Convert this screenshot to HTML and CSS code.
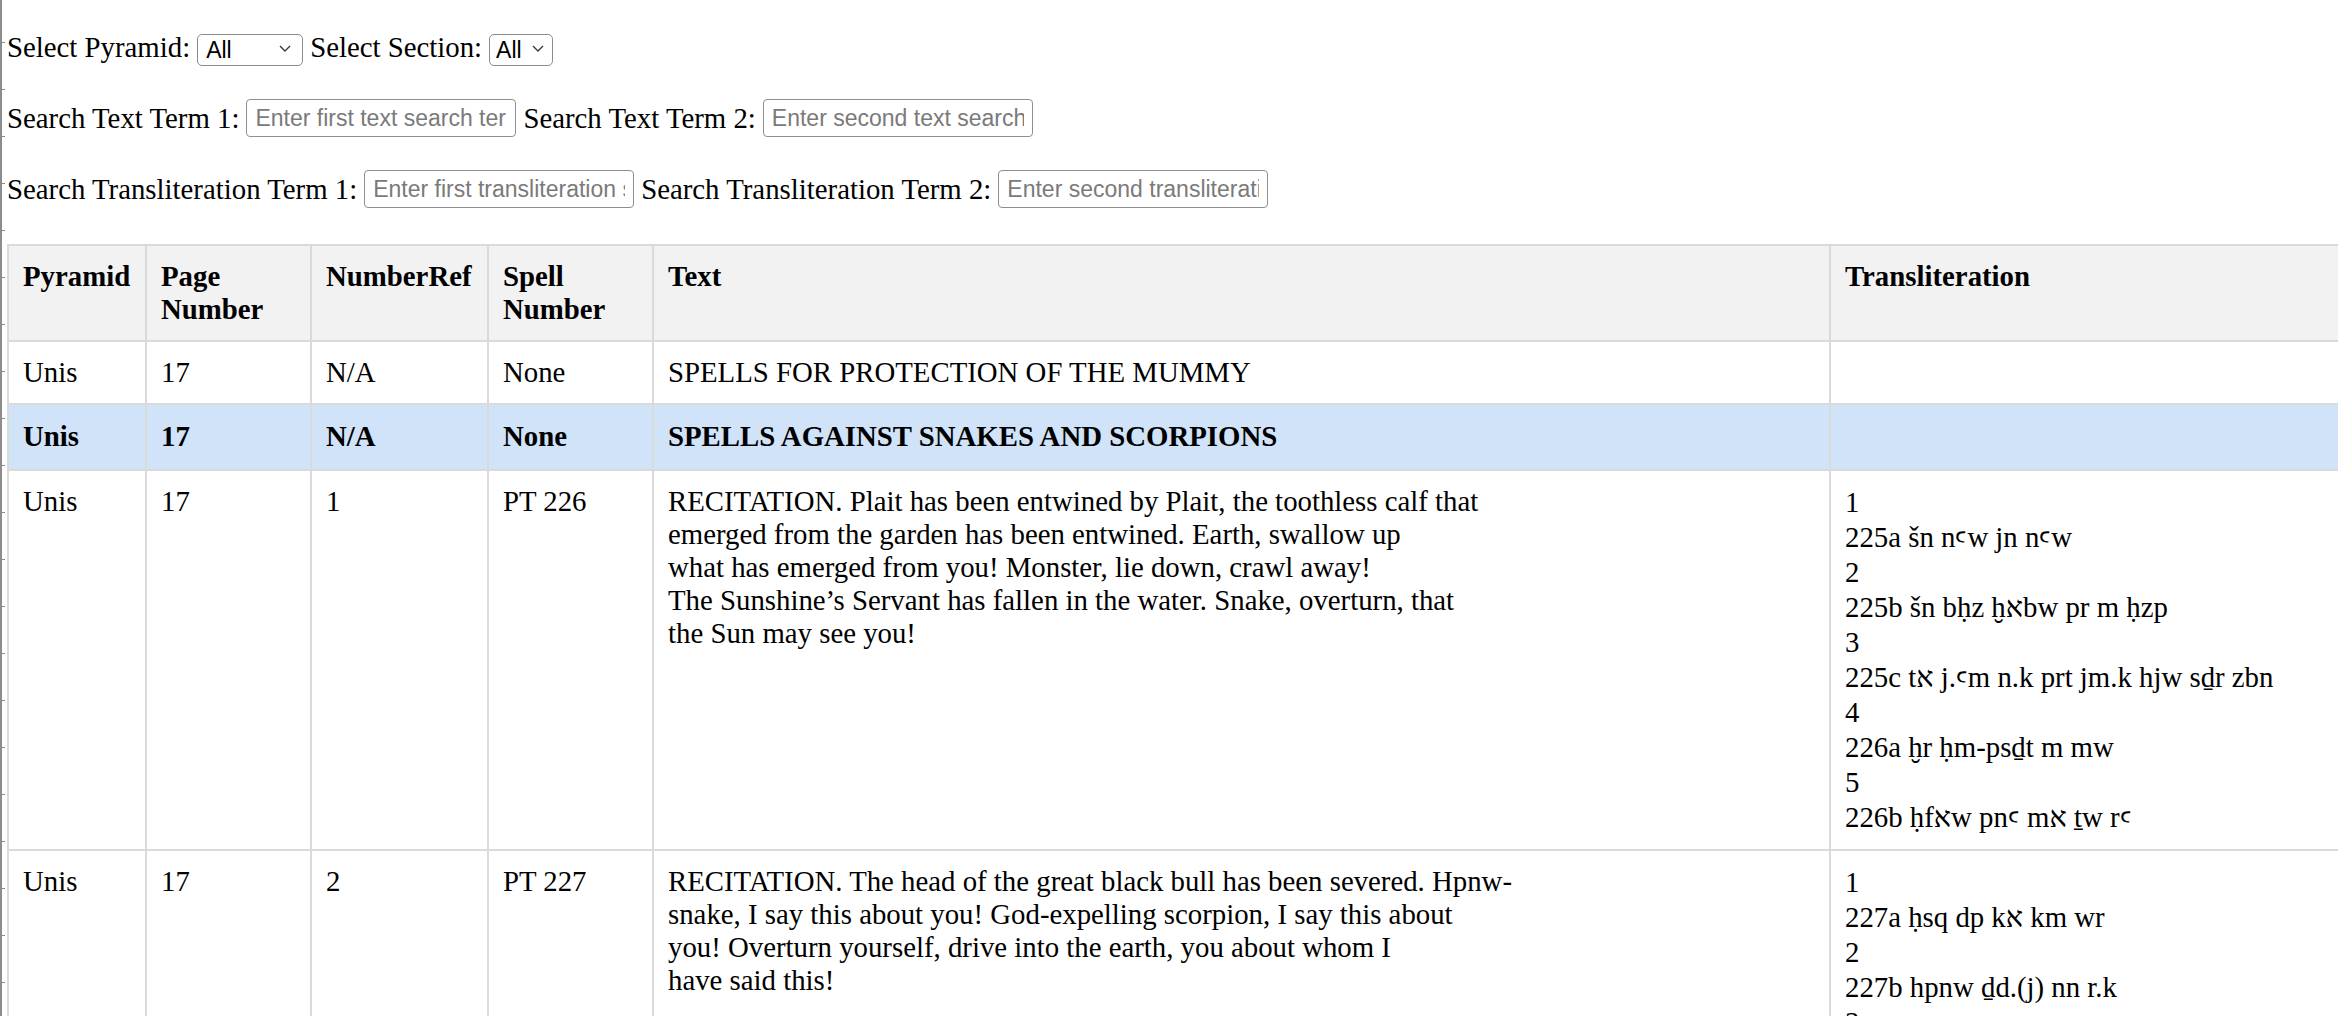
FILE: index.html
```html
<!DOCTYPE html>
<html lang="en">
<head>
<meta charset="utf-8">
<title>Pyramid Texts</title>
<link rel="stylesheet" href="styles.css">
</head>
<body>
<div class="page">
  <div class="filters">
    <div class="filter-row row-select">
      <label class="lbl">Select Pyramid:</label>
      <span class="select-wrap wide">
        <select class="select"><option>All</option><option>Unis</option></select>
        <svg class="chev" width="12" height="7" viewBox="0 0 12 7"><path d="M1 1 L6 6 L11 1" fill="none" stroke="#3a3a3a" stroke-width="1.4"/></svg>
      </span>
      <label class="lbl">Select Section:</label>
      <span class="select-wrap narrow">
        <select class="select"><option>All</option></select>
        <svg class="chev" width="12" height="7" viewBox="0 0 12 7"><path d="M1 1 L6 6 L11 1" fill="none" stroke="#3a3a3a" stroke-width="1.4"/></svg>
      </span>
    </div>
    <div class="filter-row row-text">
      <label class="lbl">Search Text Term 1:</label>
      <input class="field" type="text" placeholder="Enter first text search term">
      <label class="lbl">Search Text Term 2:</label>
      <input class="field" type="text" placeholder="Enter second text search term">
    </div>
    <div class="filter-row row-translit">
      <label class="lbl">Search Transliteration Term 1:</label>
      <input class="field" type="text" placeholder="Enter first transliteration search term">
      <label class="lbl">Search Transliteration Term 2:</label>
      <input class="field" type="text" placeholder="Enter second transliteration search term">
    </div>
  </div>

  <table class="data">
    <colgroup>
      <col class="c-pyr">
      <col class="c-page">
      <col class="c-ref">
      <col class="c-spell">
      <col class="c-text">
      <col class="c-trans">
    </colgroup>
    <thead>
      <tr>
        <th>Pyramid</th>
        <th>Page<br>Number</th>
        <th>NumberRef</th>
        <th>Spell<br>Number</th>
        <th>Text</th>
        <th>Transliteration</th>
      </tr>
    </thead>
    <tbody>
      <tr>
        <td>Unis</td>
        <td>17</td>
        <td>N/A</td>
        <td>None</td>
        <td>SPELLS FOR PROTECTION OF THE MUMMY</td>
        <td></td>
      </tr>
      <tr class="highlight">
        <td>Unis</td>
        <td>17</td>
        <td>N/A</td>
        <td>None</td>
        <td>SPELLS AGAINST SNAKES AND SCORPIONS</td>
        <td></td>
      </tr>
      <tr>
        <td>Unis</td>
        <td>17</td>
        <td>1</td>
        <td>PT 226</td>
        <td>RECITATION. Plait has been entwined by Plait, the toothless calf that<br>emerged from the garden has been entwined. Earth, swallow up<br>what has emerged from you! Monster, lie down, crawl away!<br>The Sunshine’s Servant has fallen in the water. Snake, overturn, that<br>the Sun may see you!</td>
        <td class="translit">1<br>225a šn nꜥw jn nꜥw<br>2<br>225b šn bḥz ḫאbw pr m ḥzp<br>3<br>225c tא j.ꜥm n.k prt jm.k hjw sḏr zbn<br>4<br>226a ḫr ḥm-psḏt m mw<br>5<br>226b ḥfאw pnꜥ mא ṯw rꜥ</td>
      </tr>
      <tr>
        <td>Unis</td>
        <td>17</td>
        <td>2</td>
        <td>PT 227</td>
        <td>RECITATION. The head of the great black bull has been severed. Hpnw-<br>snake, I say this about you! God-expelling scorpion, I say this about<br>you! Overturn yourself, drive into the earth, you about whom I<br>have said this!</td>
        <td class="translit">1<br>227a ḥsq dp kא km wr<br>2<br>227b hpnw ḏd.(j) nn r.k<br>3<br>227c ḥw.t(j) ḏt.k</td>
      </tr>
    </tbody>
  </table>
</div>
</body>
</html>
```

FILE: styles.css
```css
html, body {
  margin: 0;
  padding: 0;
  overflow: hidden;
  background: #ffffff;
}

body {
  font-family: "Liberation Serif", "Times New Roman", serif;
  font-size: 28.8px;
  color: #000000;
}

body::before {
  content: "";
  position: fixed;
  left: 0;
  top: 0;
  bottom: 0;
  width: 5px;
  background-image:
    linear-gradient(#8c8c8c, #8c8c8c),
    repeating-linear-gradient(to bottom, transparent 0, transparent 42px, #8c8c8c 42px, #8c8c8c 43px, transparent 43px, transparent 47px);
  background-size: 2px 100%, 5px 100%;
  background-repeat: no-repeat, repeat-y;
  z-index: 5;
}

.page {
  padding: 31px 0 0 7px;
}

.filters {
  display: flex;
  flex-direction: column;
  margin-bottom: 36px;
}

.filter-row {
  display: flex;
  align-items: center;
  gap: 7px;
}

.row-select { margin-bottom: 35px; }
.row-text { margin-bottom: 33px; }

.lbl {
  white-space: nowrap;
  line-height: 1.15;
}

.select-wrap {
  position: relative;
  display: inline-block;
  height: 32px;
}

.select-wrap.wide { width: 106px; }
.select-wrap.narrow { width: 64px; }

.select {
  -webkit-appearance: none;
  appearance: none;
  box-sizing: border-box;
  width: 100%;
  height: 32px;
  margin: 0;
  padding: 0 0 0 8px;
  border: 1.5px solid #8d8d8d;
  border-radius: 5px;
  background: #ffffff;
  color: #000000;
  font-family: "Liberation Sans", Arial, sans-serif;
  font-size: 23px;
}

.narrow .select {
  padding-left: 6px;
}

.chev {
  position: absolute;
  right: 12px;
  top: 13px;
  pointer-events: none;
}

.narrow .chev {
  right: 9px;
}

.field {
  box-sizing: border-box;
  width: 270px;
  height: 38px;
  margin: 0;
  padding: 0 8px;
  border: 1.5px solid #8f8f8f;
  border-radius: 4px;
  background: #ffffff;
  font-family: "Liberation Sans", Arial, sans-serif;
  font-size: 23px;
  color: #000000;
}

.field::placeholder {
  color: #7a7a7a;
}

.data {
  border-collapse: collapse;
  table-layout: fixed;
  width: 2522px;
}

.c-pyr { width: 138px; }
.c-page { width: 165px; }
.c-ref { width: 177px; }
.c-spell { width: 165px; }
.c-text { width: 1177px; }
.c-trans { width: 700px; }

.data th,
.data td {
  border: 2px solid #dadada;
  padding: 14px 14px;
  text-align: left;
  vertical-align: top;
  line-height: 1.15;
}

.data th {
  background: #f2f2f2;
  font-weight: bold;
  white-space: nowrap;
}

.data .highlight td {
  background: #d0e3f8;
  font-weight: bold;
  padding-top: 15px;
  padding-bottom: 15px;
}

.data td.translit {
  line-height: 35px;
}
```
